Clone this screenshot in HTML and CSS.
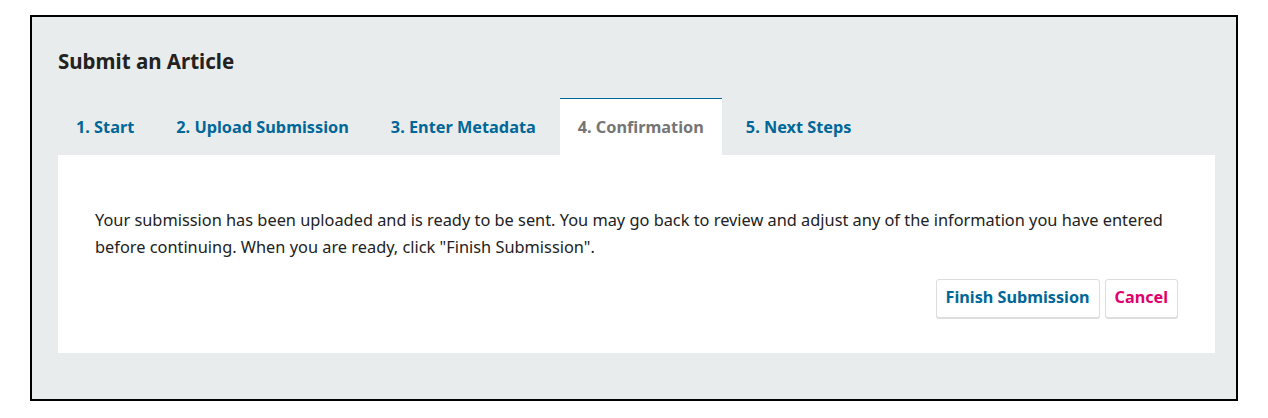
FILE: index.html
```html
<!DOCTYPE html>
<html lang="en">
<head>
<meta charset="utf-8">
<title>Submit an Article</title>
<link rel="stylesheet" href="styles.css">
</head>
<body>
<div class="frame">
  <h1 class="title">Submit an Article</h1>
  <ul class="tabs">
    <li class="tab"><a href="#">1. Start</a></li>
    <li class="tab"><a href="#">2. Upload Submission</a></li>
    <li class="tab"><a href="#">3. Enter Metadata</a></li>
    <li class="tab active"><a href="#">4. Confirmation</a></li>
    <li class="tab"><a href="#">5. Next Steps</a></li>
  </ul>
  <div class="panel">
    <p class="message">Your submission has been uploaded and is ready to be sent. You may go back to review and adjust any of the information you have entered before continuing. When you are ready, click "Finish Submission".</p>
    <div class="actions">
      <button class="btn btn-primary">Finish Submission</button>
      <button class="btn btn-cancel">Cancel</button>
    </div>
  </div>
</div>
</body>
</html>
```
FILE: styles.css
```css
html, body {
  margin: 0;
  padding: 0;
  background: #fff;
}
body {
  font-family: "Noto Sans", "Open Sans", sans-serif;
  color: #222;
}
.frame {
  margin: 15px 30px 0 30px;
  border: 2px solid #000;
  background: #e9ecec;
  padding: 0 21px 46px 26px;
  box-sizing: border-box;
  width: 1208px;
  height: 386px;
}
.title {
  margin: 0;
  padding-top: 32px;
  font-size: 20.5px;
  font-weight: 700;
  line-height: 24px;
  color: #222;
}
.tabs {
  list-style: none;
  margin: 0;
  padding: 0;
  margin-top: 25px;
  display: flex;
  gap: 6px;
}
.tab {
  border-top: 1px solid transparent;
  height: 56px;
  display: flex;
  align-items: center;
  padding: 0 18px;
}
.tab a {
  font-size: 16.3px;
  font-weight: 700;
  color: #006798;
  text-decoration: none;
}
.tab.active {
  background: #fff;
  border-top-color: #006798;
}
.tab.active a {
  color: #757575;
}
.panel {
  background: #fff;
  padding: 52px 37px 35px 37px;
}
.message {
  margin: 0;
  font-size: 16.35px;
  line-height: 27px;
  color: #222;
}
.actions {
  display: flex;
  justify-content: flex-end;
  gap: 5px;
  margin-top: 18px;
}
.btn {
  font-family: "Noto Sans", "Open Sans", sans-serif;
  font-size: 16.2px;
  font-weight: 700;
  height: 39px;
  padding: 0 9px 3px 9px;
  background: #fff;
  border: 1px solid #ddd;
  border-radius: 3px;
  box-shadow: 0 1px 0 #ddd;
  cursor: pointer;
}
.btn-primary {
  color: #006798;
}
.btn-cancel {
  color: #e0006c;
}
```
